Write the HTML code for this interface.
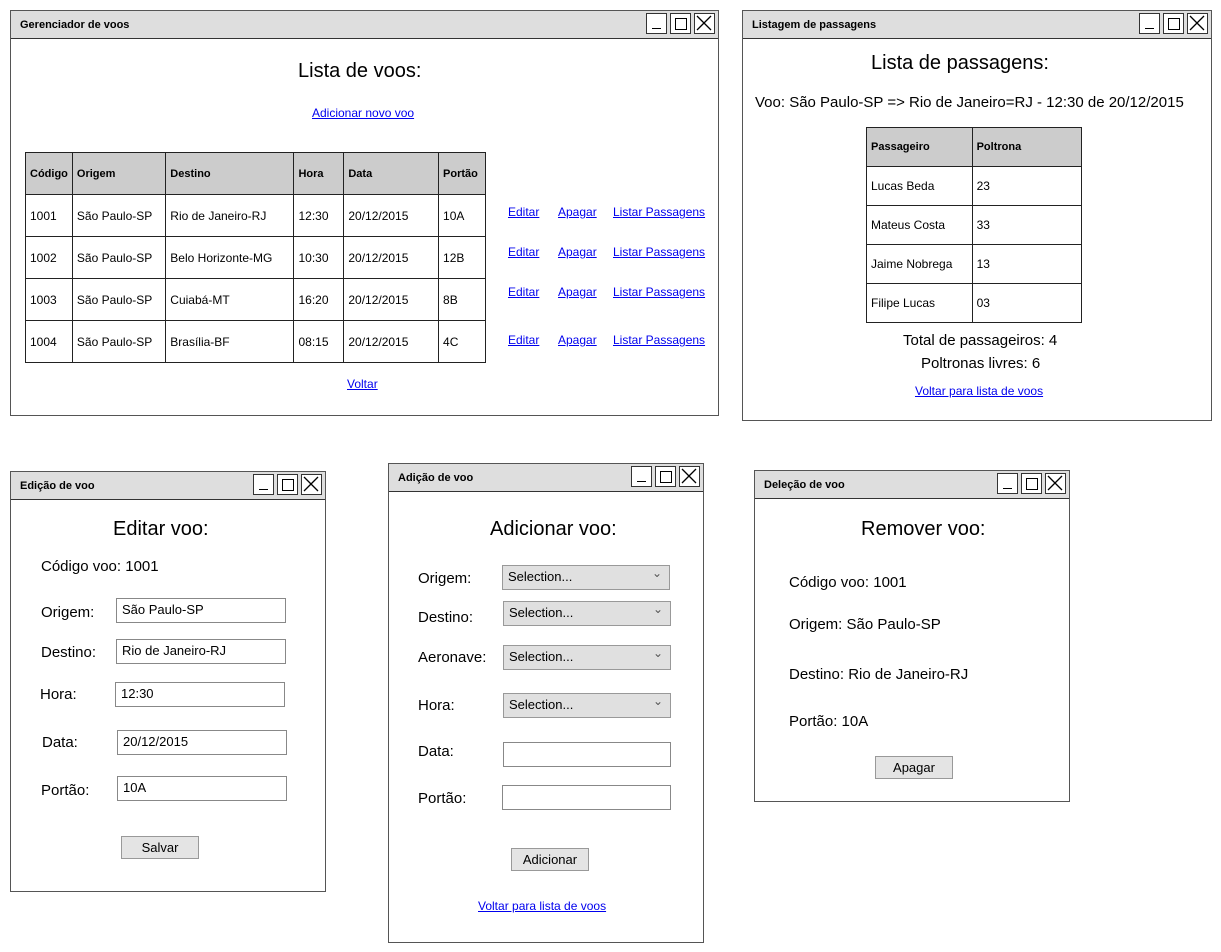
<!DOCTYPE html><html><head><meta charset="utf-8"><style>
*{box-sizing:border-box;margin:0;padding:0}
body{width:1221px;height:952px;background:#fff;position:relative;font-family:"Liberation Sans",sans-serif;color:#000;overflow:hidden}
.w{position:absolute;border:1.5px solid #555;background:#fff}
.tb{position:absolute;left:0;right:0;top:0;height:28px;background:#dedede;border-bottom:1.5px solid #333;font-size:11px;font-weight:bold;padding:8px 0 0 9px}
.btns{position:absolute;right:3px;top:2px;display:flex;gap:3px}
.btns span{width:21px;height:21px;border:1.5px solid #333;background:#fff;position:relative;display:block}
.mn:after{content:"";position:absolute;left:5px;right:5px;bottom:4px;border-bottom:1.5px solid #000}
.mx:after{content:"";position:absolute;left:4px;top:4px;width:10px;height:10px;border:1.5px solid #000}
.a{position:absolute;white-space:nowrap}
.h{font-size:20px}
.l{color:#00e;text-decoration:underline;font-size:12px}
.t{font-size:15px}
.in{position:absolute;border:1px solid #888;background:#fff;font-size:13px;padding:3px 5px;height:25px}
.sel{position:absolute;border:1px solid #999;background:#e0e0e0;font-size:13px;padding:3px 5px;height:25px}
.sel:after{content:"⌄";position:absolute;right:7px;top:0px;font-size:12px;color:#555}
.bt{position:absolute;border:1px solid #999;background:#e4e4e4;font-size:13px;text-align:center;padding-top:3px;height:23px}
table{position:absolute;border-collapse:collapse;font-size:12px}
td{border:1px solid #222;padding:0 4px;vertical-align:middle}
tr.hd td{background:#ccc;font-weight:bold;font-size:11px}
</style></head><body>
<svg width="0" height="0" style="position:absolute"></svg>

<!-- W1 -->
<div class="w" style="left:10px;top:10px;width:709px;height:406px">
<div class="tb">Gerenciador de voos<div class="btns"><span class="mn"></span><span class="mx"></span><span><svg width="18" height="18" style="position:absolute;left:0;top:0"><path d="M2 2L16 16M16 2L2 16" stroke="#000" stroke-width="1.3"/></svg></span></div></div>
</div>
<div class="a h" style="left:298px;top:60px">Lista de voos:</div>
<div class="a l" style="left:312px;top:106px">Adicionar novo voo</div>
<table style="left:25px;top:152px;width:461px">
<colgroup><col style="width:46px"><col style="width:94px"><col style="width:129px"><col style="width:50px"><col style="width:95px"><col style="width:47px"></colgroup>
<tr class="hd" style="height:42px"><td>Código</td><td>Origem</td><td>Destino</td><td>Hora</td><td>Data</td><td>Portão</td></tr>
<tr style="height:42px"><td>1001</td><td>São Paulo-SP</td><td>Rio de Janeiro-RJ</td><td>12:30</td><td>20/12/2015</td><td>10A</td></tr>
<tr style="height:42px"><td>1002</td><td>São Paulo-SP</td><td>Belo Horizonte-MG</td><td>10:30</td><td>20/12/2015</td><td>12B</td></tr>
<tr style="height:42px"><td>1003</td><td>São Paulo-SP</td><td>Cuiabá-MT</td><td>16:20</td><td>20/12/2015</td><td>8B</td></tr>
<tr style="height:42px"><td>1004</td><td>São Paulo-SP</td><td>Brasília-BF</td><td>08:15</td><td>20/12/2015</td><td>4C</td></tr>
</table>
<div class="a l" style="left:508px;top:205px">Editar</div><div class="a l" style="left:558px;top:205px">Apagar</div><div class="a l" style="left:613px;top:205px">Listar Passagens</div>
<div class="a l" style="left:508px;top:245px">Editar</div><div class="a l" style="left:558px;top:245px">Apagar</div><div class="a l" style="left:613px;top:245px">Listar Passagens</div>
<div class="a l" style="left:508px;top:285px">Editar</div><div class="a l" style="left:558px;top:285px">Apagar</div><div class="a l" style="left:613px;top:285px">Listar Passagens</div>
<div class="a l" style="left:508px;top:333px">Editar</div><div class="a l" style="left:558px;top:333px">Apagar</div><div class="a l" style="left:613px;top:333px">Listar Passagens</div>
<div class="a l" style="left:347px;top:377px">Voltar</div>

<!-- W2 -->
<div class="w" style="left:742px;top:10px;width:470px;height:411px">
<div class="tb">Listagem de passagens<div class="btns"><span class="mn"></span><span class="mx"></span><span><svg width="18" height="18" style="position:absolute;left:0;top:0"><path d="M2 2L16 16M16 2L2 16" stroke="#000" stroke-width="1.3"/></svg></span></div></div>
</div>
<div class="a h" style="left:871px;top:52px">Lista de passagens:</div>
<div class="a t" style="left:755px;top:94px">Voo: São Paulo-SP =&gt; Rio de Janeiro=RJ - 12:30 de 20/12/2015</div>
<table style="left:866px;top:127px;width:216px">
<colgroup><col style="width:106px"><col style="width:110px"></colgroup>
<tr class="hd" style="height:39px"><td>Passageiro</td><td>Poltrona</td></tr>
<tr style="height:39px"><td>Lucas Beda</td><td>23</td></tr>
<tr style="height:39px"><td>Mateus Costa</td><td>33</td></tr>
<tr style="height:39px"><td>Jaime Nobrega</td><td>13</td></tr>
<tr style="height:39px"><td>Filipe Lucas</td><td>03</td></tr>
</table>
<div class="a t" style="left:903px;top:332px">Total de passageiros: 4</div>
<div class="a t" style="left:921px;top:355px">Poltronas livres: 6</div>
<div class="a l" style="left:915px;top:384px">Voltar para lista de voos</div>

<!-- W3 -->
<div class="w" style="left:10px;top:471px;width:316px;height:421px">
<div class="tb">Edição de voo<div class="btns"><span class="mn"></span><span class="mx"></span><span><svg width="18" height="18" style="position:absolute;left:0;top:0"><path d="M2 2L16 16M16 2L2 16" stroke="#000" stroke-width="1.3"/></svg></span></div></div>
</div>
<div class="a h" style="left:113px;top:518px">Editar voo:</div>
<div class="a t" style="left:41px;top:558px">Código voo: 1001</div>
<div class="a t" style="left:41px;top:604px">Origem:</div><div class="in" style="left:116px;top:598px;width:170px">São Paulo-SP</div>
<div class="a t" style="left:41px;top:644px">Destino:</div><div class="in" style="left:116px;top:639px;width:170px">Rio de Janeiro-RJ</div>
<div class="a t" style="left:40px;top:686px">Hora:</div><div class="in" style="left:115px;top:682px;width:170px">12:30</div>
<div class="a t" style="left:42px;top:734px">Data:</div><div class="in" style="left:117px;top:730px;width:170px">20/12/2015</div>
<div class="a t" style="left:41px;top:782px">Portão:</div><div class="in" style="left:117px;top:776px;width:170px">10A</div>
<div class="bt" style="left:121px;top:836px;width:78px">Salvar</div>

<!-- W4 -->
<div class="w" style="left:388px;top:463px;width:316px;height:480px">
<div class="tb">Adição de voo<div class="btns"><span class="mn"></span><span class="mx"></span><span><svg width="18" height="18" style="position:absolute;left:0;top:0"><path d="M2 2L16 16M16 2L2 16" stroke="#000" stroke-width="1.3"/></svg></span></div></div>
</div>
<div class="a h" style="left:490px;top:518px">Adicionar voo:</div>
<div class="a t" style="left:418px;top:570px">Origem:</div><div class="sel" style="left:502px;top:565px;width:168px">Selection...</div>
<div class="a t" style="left:418px;top:609px">Destino:</div><div class="sel" style="left:503px;top:601px;width:168px">Selection...</div>
<div class="a t" style="left:418px;top:649px">Aeronave:</div><div class="sel" style="left:503px;top:645px;width:168px">Selection...</div>
<div class="a t" style="left:418px;top:697px">Hora:</div><div class="sel" style="left:503px;top:693px;width:168px">Selection...</div>
<div class="a t" style="left:418px;top:743px">Data:</div><div class="in" style="left:503px;top:742px;width:168px"></div>
<div class="a t" style="left:418px;top:790px">Portão:</div><div class="in" style="left:502px;top:785px;width:169px"></div>
<div class="bt" style="left:511px;top:848px;width:78px">Adicionar</div>
<div class="a l" style="left:478px;top:899px">Voltar para lista de voos</div>

<!-- W5 -->
<div class="w" style="left:754px;top:470px;width:316px;height:332px">
<div class="tb">Deleção de voo<div class="btns"><span class="mn"></span><span class="mx"></span><span><svg width="18" height="18" style="position:absolute;left:0;top:0"><path d="M2 2L16 16M16 2L2 16" stroke="#000" stroke-width="1.3"/></svg></span></div></div>
</div>
<div class="a h" style="left:861px;top:518px">Remover voo:</div>
<div class="a t" style="left:789px;top:574px">Código voo: 1001</div>
<div class="a t" style="left:789px;top:616px">Origem: São Paulo-SP</div>
<div class="a t" style="left:789px;top:666px">Destino: Rio de Janeiro-RJ</div>
<div class="a t" style="left:789px;top:713px">Portão: 10A</div>
<div class="bt" style="left:875px;top:756px;width:78px">Apagar</div>
</body></html>
